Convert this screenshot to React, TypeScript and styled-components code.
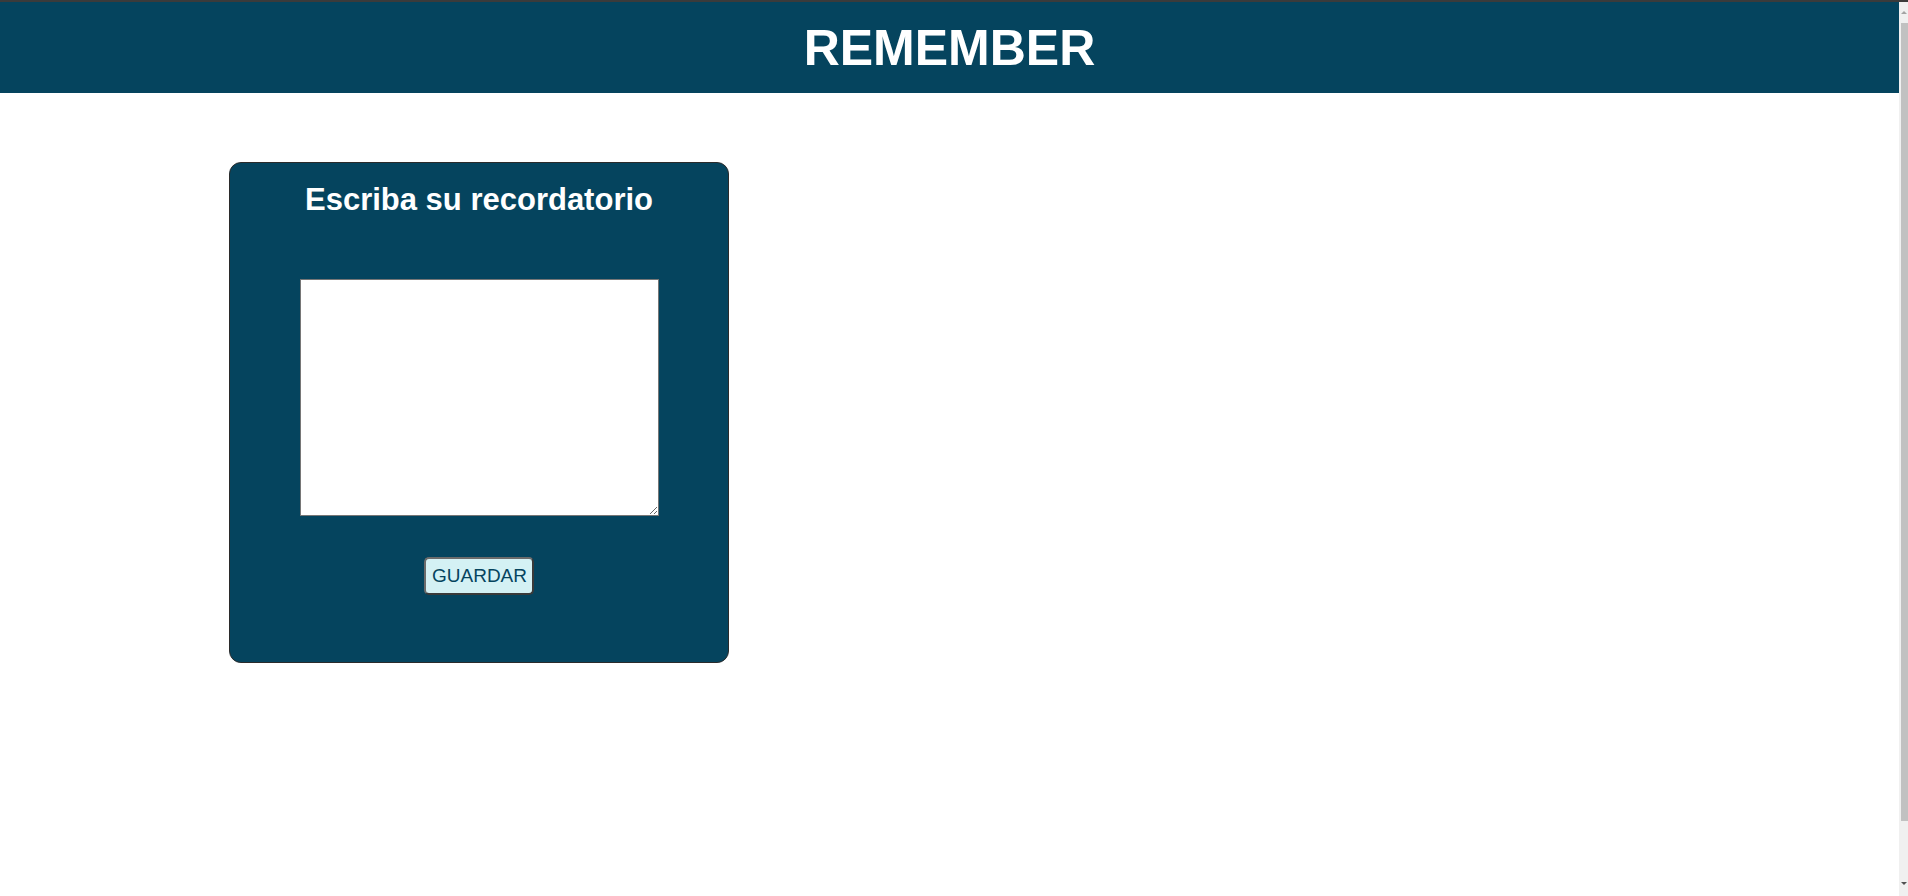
import React, { useState } from "react";
import styled, { createGlobalStyle } from "styled-components";

const GlobalStyle = createGlobalStyle`
  * {
    box-sizing: border-box;
  }
  body {
    margin: 0;
    background: #ffffff;
    font-family: "Liberation Sans", Arial, sans-serif;
  }
`;

const Window = styled.div`
  display: flex;
  height: 896px;
  border-top: 2px solid #3b3b3b;
  overflow: hidden;
`;

const Page = styled.div`
  flex: 1;
  min-width: 0;
`;

const ScrollRail = styled.div`
  width: 9px;
  background: #f0f0f0;
  display: flex;
  flex-direction: column;
  align-items: flex-end;
  padding-top: 9px;
  .arrow {
    width: 0;
    height: 0;
    margin-right: 1px;
    border-left: 3px solid transparent;
    border-right: 3px solid transparent;
  }
  .up {
    border-bottom: 3px solid #a3a3a3;
  }
  .down {
    border-top: 3px solid #505050;
    margin-top: auto;
    margin-bottom: 11px;
  }
  .thumb {
    width: 7px;
    height: 798px;
    margin-top: 9px;
    background: #c1c1c1;
  }
`;

const Header = styled.header`
  height: 91px;
  background: #05445e;
  display: flex;
  align-items: center;
  justify-content: center;
  h1 {
    margin: 0;
    color: #ffffff;
    font-size: 50px;
    font-weight: 700;
    line-height: 1;
  }
`;

const Main = styled.main`
  padding: 69px 0 0 229px;
`;

const Card = styled.section`
  width: 500px;
  height: 501px;
  background: #05445e;
  border: 1px solid #2b2b2b;
  border-radius: 12px;
  padding-top: 20px;
  display: flex;
  flex-direction: column;
  align-items: center;
  .title {
    margin: 0;
    color: #ffffff;
    font-size: 31px;
    font-weight: 700;
    line-height: 34px;
  }
`;

const NoteInput = styled.textarea`
  margin-top: 62px;
  width: 359px;
  height: 237px;
  border: 1px solid #767676;
  background: #ffffff;
  font-family: "Liberation Sans", Arial, sans-serif;
  font-size: 16px;
  padding: 2px;
  resize: both;
`;

const SaveButton = styled.button`
  margin-top: 41px;
  width: 110px;
  height: 38px;
  background: #d4f1f4;
  color: #05445e;
  border: 2px solid #3a3a3a;
  border-top-color: #6b6b6b;
  border-left-color: #6b6b6b;
  border-radius: 5px;
  font-family: "Liberation Sans", Arial, sans-serif;
  font-size: 19px;
  cursor: pointer;
`;

const App = () => {
  const [note, setNote] = useState("");
  return (
    <>
      <GlobalStyle />
      <Window>
        <Page>
          <Header>
            <h1>REMEMBER</h1>
          </Header>
          <Main>
            <Card>
              <h2 className="title">Escriba su recordatorio</h2>
              <NoteInput value={note} onChange={(e) => setNote(e.target.value)} />
              <SaveButton type="button">GUARDAR</SaveButton>
            </Card>
          </Main>
        </Page>
        <ScrollRail>
          <span className="arrow up" />
          <span className="thumb" />
          <span className="arrow down" />
        </ScrollRail>
      </Window>
    </>
  );
};

export default App;
